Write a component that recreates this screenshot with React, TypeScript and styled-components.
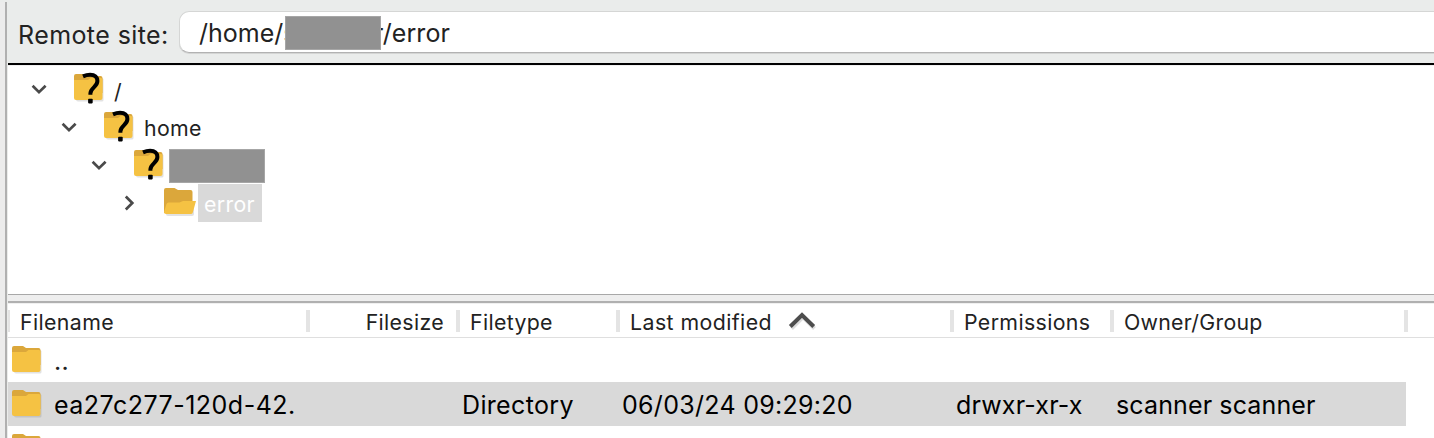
import React from "react";
import styled, { createGlobalStyle } from "styled-components";

const GlobalStyle = createGlobalStyle`
  * { box-sizing: border-box; }
  body { margin: 0; background: #fff; overflow: hidden; font-family: Inter, "Liberation Sans", sans-serif; font-weight: 425; }
`;

const Window = styled.div`
  display: flex;
  width: 1434px;
  height: 438px;
  overflow: hidden;
  background: #eaeceb;
`;

const Gutter = styled.div`
  flex: 0 0 7px;
  margin-top: 2px;
  background: #ececec;
  border-right: 2px solid #b0b0b0;
`;

const Pane = styled.main`
  flex: 1;
  min-width: 0;
  display: flex;
  flex-direction: column;
  padding-left: 1px;
`;

const Text = styled.span<{ $size: number; $spacing?: number; $color?: string; $drop?: number }>`
  display: block;
  white-space: pre;
  flex: none;
  line-height: 30px;
  font-size: ${(p) => p.$size}px;
  letter-spacing: ${(p) => p.$spacing ?? 0}px;
  color: ${(p) => p.$color ?? "#222"};
  padding-top: ${(p) => p.$drop ?? 0}px;
`;

const SiteBar = styled.header`
  flex: 0 0 65px;
  display: flex;
  align-items: flex-start;
  padding: 11px 0 0 10px;
  border-bottom: 2px solid #000;
`;

const SiteLabel = styled.label`
  width: 161px;
  padding-top: 9px;
`;

const PathField = styled.div`
  flex: 1;
  height: 42px;
  display: flex;
  align-items: flex-start;
  padding: 6px 0 0 19px;
  background: #fff;
  border: 1px solid #d5d6d5;
  border-right: 0;
  border-bottom-color: #b2b2b2;
  border-radius: 10px 0 0 10px;
  box-shadow: 0 1px 0 #d4d5d4;
`;

const Mask = styled.span<{ $width: number; $height: number }>`
  flex: none;
  position: relative;
  width: ${(p) => p.$width}px;
  height: ${(p) => p.$height}px;
  background: #919191;
  border: 1px solid #a6a6a6;
`;

const PathMask = styled(Mask)`
  margin: -2px -7px 0 -11.5px;
`;

const Tree = styled.section`
  flex: 0 0 230px;
  padding-top: 4px;
  background: #fff;
  border-bottom: 1px solid #a8a8a8;
  box-shadow: inset 0 1px 0 #f0f0f0;
`;

const TreeRow = styled.div<{ $depth: number }>`
  display: flex;
  align-items: flex-start;
  height: 38px;
  padding-left: ${(p) => 20 + p.$depth * 30}px;
`;

const Twisty = styled.svg`
  flex: none;
  width: 22px;
  height: 22px;
  margin: 9px 24px 0 0;
`;

const FolderSvg = styled.svg`
  flex: none;
  width: 36px;
  height: 36px;
  overflow: visible;
`;

const TreeLabel = styled.div<{ $gap: number }>`
  margin-left: ${(p) => p.$gap}px;
  padding-top: 6px;
`;

const SelectedLabel = styled.div`
  width: 64px;
  height: 38px;
  margin: 1px 0 0 -2px;
  padding: 5px 0 0 6px;
  background: #d9d9d9;
`;

const TreeMask = styled(Mask)`
  margin: 4px 0 0 -1px;
`;

const Splitter = styled.div`
  flex: 0 0 8px;
  background: #eee;
  border-bottom: 2px solid #b0b0b0;
`;

const FileList = styled.section`
  flex: 1;
  min-height: 0;
  overflow: hidden;
  background: #fff;
`;

const columns = "300px 150px 160px 334px 160px 294px";

const HeaderRow = styled.div`
  display: grid;
  grid-template-columns: ${columns};
  height: 35px;
  padding-top: 7px;
  border-bottom: 1px solid #dfdfdf;
  box-shadow: inset 0 1px 0 #f0f0f0;
`;

const HeaderCell = styled.div<{ $end?: boolean }>`
  display: flex;
  justify-content: ${(p) => (p.$end ? "flex-end" : "flex-start")};
  height: 22px;
  margin-right: -2px;
  padding: 0 ${(p) => (p.$end ? 12 : 0)}px 0 12px;
  border-right: 4px solid #e4e4e4;
  line-height: 22px;

  &:first-child { box-shadow: inset 2px 0 0 #e4e4e4; }
`;

const HeaderText = styled(Text)`
  line-height: 24px;
`;

const SortArrow = styled.svg`
  flex: none;
  width: 30px;
  height: 22px;
  margin-left: 16px;
  overflow: visible;
`;

const FileRow = styled.div<{ $selected?: boolean }>`
  display: grid;
  grid-template-columns: ${columns};
  width: 1398px;
  height: 44px;
  background: ${(p) => (p.$selected ? "#d9d9d9" : "#fff")};
`;

const FileCell = styled.div`
  display: flex;
  align-items: flex-start;
  min-width: 0;
  padding: 8px 0 0 4px;
`;

const NameCell = styled(FileCell)`
  gap: 6px;
`;

function Folder({ unknown = false, shadow = "#e2e2e2" }: { unknown?: boolean; shadow?: string }) {
  return (
    <FolderSvg viewBox="0 0 36 36">
      <path d="M2 4h26q1.500 0 1.500 1.500V26q0 1.500-1.500 1.500H4q-2 0-2-2z" fill={shadow} />
      <path d="M0 2Q0 0 2 0h9l3 2h12.500Q28.500 2 28.500 4v15H0z" fill="#dba73b" />
      <path d="M0 6h14l2.500-2H27q1.500 0 1.500 1.500V24q0 2-2 2H2q-2 0-2-2z" fill="#f5c243" />
      {unknown && (
        <g transform="translate(-.2 0)">
          <path d="M9.200 2.400Q12.800.8 16.300.8C21.200.8 23.600 3.400 23.600 7c0 6-7 6.700-7 12.500v1.200" fill="none" stroke="#000" strokeWidth="4" />
          <rect x="14.300" y="24.800" width="4.600" height="4.600" rx=".8" />
        </g>
      )}
    </FolderSvg>
  );
}

function OpenFolder() {
  return (
    <FolderSvg viewBox="0 0 36 36">
      <path d="M2 16h28v10q0 2-2 2H4q-2 0-2-2z" fill="#e2e2e2" />
      <path d="M0 2Q0 0 2 0h8.500L14 2h12.500Q28.500 2 28.500 4v18L0 25z" fill="#dba73b" />
      <path d="M2.500 16q.5-1.500 2-1.500h11L19 13h13l-3.200 11.500q-.4 1.500-2 1.500H2q-2 0-2-2z" fill="#f5c243" />
    </FolderSvg>
  );
}

function Chevron({ open = true }: { open?: boolean }) {
  return (
    <Twisty viewBox="0 0 22 22">
      <path d={open ? "M12.600 7.800l6.400 6.400 6.600-6.400" : "M15.800 4.500l6.500 6.500-6.500 6.500"} transform="translate(-8 0)" fill="none" stroke="#4a4a4a" strokeWidth="2.700" />
    </Twisty>
  );
}

const IconSlot = styled.div<{ $top: number; $width: number }>`
  flex: none;
  width: ${(p) => p.$width}px;
  padding-top: ${(p) => p.$top}px;
`;

export default function App() {
  return (
    <>
      <GlobalStyle />
      <Window>
        <Gutter />
        <Pane>
          <SiteBar>
            <SiteLabel><Text $size={25} $spacing={0.42}>Remote site:</Text></SiteLabel>
            <PathField>
              <Text $size={25} $spacing={0}>/home/s</Text>
              <PathMask $width={96} $height={34} />
              <Text $size={25} $spacing={0.1}>r/error</Text>
            </PathField>
          </SiteBar>
          <Tree>
            <TreeRow $depth={0}>
              <Chevron />
              <IconSlot $top={5} $width={36}><Folder unknown /></IconSlot>
              <TreeLabel $gap={4}><Text $size={21.3} $drop={1}>/</Text></TreeLabel>
            </TreeRow>
            <TreeRow $depth={1}>
              <Chevron />
              <IconSlot $top={5} $width={36}><Folder unknown /></IconSlot>
              <TreeLabel $gap={4}><Text $size={21.3} $spacing={0.35}>home</Text></TreeLabel>
            </TreeRow>
            <TreeRow $depth={2}>
              <Chevron />
              <IconSlot $top={5} $width={36}><Folder unknown /></IconSlot>
              <TreeMask $width={96} $height={34} />
            </TreeRow>
            <TreeRow $depth={3}>
              <Chevron open={false} />
              <IconSlot $top={5} $width={36}><OpenFolder /></IconSlot>
              <SelectedLabel><Text $size={21.3} $spacing={0.35} $color="#fff">error</Text></SelectedLabel>
            </TreeRow>
          </Tree>
          <Splitter />
          <FileList>
            <HeaderRow>
              <HeaderCell><HeaderText $size={21.3} $spacing={0.38}>Filename</HeaderText></HeaderCell>
              <HeaderCell $end><HeaderText $size={21.3} $spacing={0.35}>Filesize</HeaderText></HeaderCell>
              <HeaderCell><HeaderText $size={21.3} $spacing={0.34}>Filetype</HeaderText></HeaderCell>
              <HeaderCell>
                <HeaderText $size={21.3} $spacing={0.44}>Last modified</HeaderText>
                <SortArrow viewBox="0 0 30 22">
                  <path d="M3.500 18.500L15 7l11.500 11.500" fill="none" stroke="#dcdcdc" strokeWidth="4" />
                  <path d="M2.300 16.500L14 5l11.700 11.500" fill="none" stroke="#4d4d4d" strokeWidth="4" />
                </SortArrow>
              </HeaderCell>
              <HeaderCell><HeaderText $size={21.3} $spacing={0.37}>Permissions</HeaderText></HeaderCell>
              <HeaderCell><HeaderText $size={21.3} $spacing={0.27}>Owner/Group</HeaderText></HeaderCell>
            </HeaderRow>
            <FileRow>
              <NameCell><Folder /><Text $size={25} $spacing={0.4}>..</Text></NameCell>
            </FileRow>
            <FileRow $selected>
              <NameCell><Folder shadow="#c3c3c3" /><Text $size={25} $spacing={0.49} $color="#000">ea27c277-120d-42.</Text></NameCell>
              <FileCell />
              <FileCell><Text $size={25} $spacing={0.34} $color="#000">Directory</Text></FileCell>
              <FileCell><Text $size={25} $spacing={0.29} $color="#000">06/03/24 09:29:20</Text></FileCell>
              <FileCell><Text $size={25} $spacing={0.16} $color="#000">drwxr-xr-x</Text></FileCell>
              <FileCell><Text $size={25} $spacing={0.13} $color="#000">scanner scanner</Text></FileCell>
            </FileRow>
            <FileRow>
              <NameCell><Folder /></NameCell>
            </FileRow>
          </FileList>
        </Pane>
      </Window>
    </>
  );
}
